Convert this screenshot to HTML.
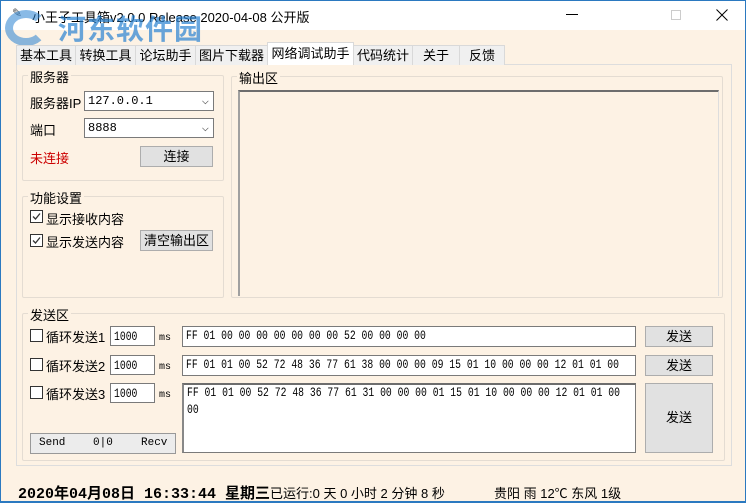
<!DOCTYPE html>
<html><head><meta charset="utf-8"><style>
*{box-sizing:border-box;margin:0;padding:0}
body{width:746px;height:503px;overflow:hidden;background:#fdf2e4;font:12px "Liberation Sans","Noto Sans CJK SC",sans-serif;color:#000;position:relative}
.a{position:absolute;white-space:nowrap}
.win{position:absolute;left:0;top:0;width:746px;height:503px;border:1px solid #2b79c0;border-bottom-width:2px}
.title{left:1px;top:1px;width:744px;height:29px;background:#fff}
.tab{top:45px;height:20px;background:#f0f0f0;border:1px solid #d9d9d9;border-bottom:none;text-align:center;line-height:19px;font-size:13px}
.tab.sel{top:42px;height:23px;background:#fff;line-height:21px}
.grp{border:1px solid #e4dcd2;border-radius:2px}
.lg{background:#fdf2e4;padding:0 2px;font-size:13px}
.box{background:#fff;border:1px solid #7a7a7a;font-family:"Liberation Mono","Noto Sans CJK SC",monospace;font-size:12px;padding:2px 3px}
.hx{display:inline-block;transform:scaleX(0.78);transform-origin:0 0;line-height:17px;font-size:12.5px}
.btn{background:#e1e1e1;border:1px solid #adadad;text-align:center;font-size:13px}
.cb{width:13px;height:13px;border:1px solid #333;background:#fff}
.mono{font-family:"Liberation Mono",monospace;font-size:11px}
</style></head><body>
<div class="a title"></div>
<div class="a" style="left:12px;top:6px;font-size:12px;color:#555">✎</div>
<div class="a" style="left:32px;top:7px;font-size:13px">小王子工具箱v2.0.0 Release 2020-04-08 公开版</div>
<div class="a" style="left:5px;top:10px;width:42px;height:36px;border-radius:50%;border:8px solid rgba(40,130,210,.55);border-right-color:transparent"></div>
<div class="a" style="left:58px;top:8px;font-size:28px;font-weight:bold;color:rgba(40,130,210,.7);letter-spacing:1px">河东软件园</div>
<div class="a" style="left:70px;top:44px;font-size:17px;font-weight:bold;color:rgba(100,160,80,.45)">www.pc0359.cn</div>
<div class="a" style="left:566px;top:14px;width:12px;height:1px;background:#000"></div>
<div class="a" style="left:671px;top:10px;width:10px;height:10px;border:1px solid #ccc"></div>
<svg class="a" style="left:716px;top:9px" width="12" height="12"><path d="M0.5 0.5L11.5 11.5M11.5 0.5L0.5 11.5" stroke="#000" stroke-width="1"/></svg>

<div class="a" style="left:16px;top:64px;width:716px;height:402px;border:1px solid #ddd;background:#fdf2e4"></div>
<div class="a tab" style="left:16px;width:60px">基本工具</div>
<div class="a tab" style="left:75px;width:61px">转换工具</div>
<div class="a tab" style="left:135px;width:61px">论坛助手</div>
<div class="a tab" style="left:195px;width:73px">图片下载器</div>
<div class="a tab sel" style="left:267px;width:87px">网络调试助手</div>
<div class="a tab" style="left:353px;width:60px">代码统计</div>
<div class="a tab" style="left:412px;width:48px">关于</div>
<div class="a tab" style="left:459px;width:46px">反馈</div>

<div class="a grp" style="left:22px;top:75px;width:202px;height:106px"></div>
<div class="a lg" style="left:28px;top:67px">服务器</div>
<div class="a" style="left:30px;top:93px;font-size:13px">服务器IP</div>
<div class="a box" style="left:84px;top:91px;width:130px;height:20px">127.0.0.1<span style="position:absolute;right:4px;top:1px;color:#555">⌵</span></div>
<div class="a" style="left:30px;top:120px;font-size:13px">端口</div>
<div class="a box" style="left:84px;top:118px;width:130px;height:20px">8888<span style="position:absolute;right:4px;top:1px;color:#555">⌵</span></div>
<div class="a" style="left:30px;top:148px;font-size:13px;color:#c00">未连接</div>
<div class="a btn" style="left:140px;top:146px;width:73px;height:21px;line-height:19px">连接</div>

<div class="a grp" style="left:22px;top:196px;width:202px;height:102px"></div>
<div class="a lg" style="left:28px;top:188px">功能设置</div>
<svg class="a" style="left:30px;top:210px" width="13" height="13"><rect x="0.5" y="0.5" width="12" height="12" fill="#fff" stroke="#333"/><path d="M3 6.5L5.5 9L10 3.5" fill="none" stroke="#333" stroke-width="1.3"/></svg>
<div class="a" style="left:46px;top:209px;font-size:13px">显示接收内容</div>
<svg class="a" style="left:30px;top:234px" width="13" height="13"><rect x="0.5" y="0.5" width="12" height="12" fill="#fff" stroke="#333"/><path d="M3 6.5L5.5 9L10 3.5" fill="none" stroke="#333" stroke-width="1.3"/></svg>
<div class="a" style="left:46px;top:232px;font-size:13px">显示发送内容</div>
<div class="a btn" style="left:140px;top:230px;width:73px;height:21px;line-height:19px">清空输出区</div>

<div class="a grp" style="left:231px;top:76px;width:492px;height:222px"></div>
<div class="a lg" style="left:237px;top:68px">输出区</div>
<div class="a" style="left:238px;top:90px;width:481px;height:206px;border-top:2px solid #6d6d6d;border-left:2px solid #a0a0a0;border-right:1px solid #ddd;background:#fdf2e4"></div>

<div class="a grp" style="left:22px;top:313px;width:703px;height:148px"></div>
<div class="a lg" style="left:28px;top:305px">发送区</div>

<div class="a cb" style="left:30px;top:329px"></div>
<div class="a" style="left:46px;top:327px;font-size:13px">循环发送1</div>
<div class="a box" style="left:110px;top:326px;width:45px;height:20px"><span class="hx">1000</span></div>
<div class="a mono" style="left:159px;top:333px;font-size:10px">ms</div>
<div class="a box" style="left:182px;top:326px;width:454px;height:21px;padding-top:1px"><span class="hx">FF 01 00 00 00 00 00 00 00 52 00 00 00 00</span></div>
<div class="a btn" style="left:645px;top:326px;width:68px;height:21px;line-height:19px">发送</div>

<div class="a cb" style="left:30px;top:358px"></div>
<div class="a" style="left:46px;top:356px;font-size:13px">循环发送2</div>
<div class="a box" style="left:110px;top:355px;width:45px;height:20px"><span class="hx">1000</span></div>
<div class="a mono" style="left:159px;top:362px;font-size:10px">ms</div>
<div class="a box" style="left:182px;top:355px;width:454px;height:21px;overflow:hidden;padding-top:1px"><span class="hx">FF 01 01 00 52 72 48 36 77 61 38 00 00 00 09 15 01 10 00 00 00 12 01 01 00</span></div>
<div class="a btn" style="left:645px;top:355px;width:68px;height:21px;line-height:19px">发送</div>

<div class="a cb" style="left:30px;top:386px"></div>
<div class="a" style="left:46px;top:384px;font-size:13px">循环发送3</div>
<div class="a box" style="left:110px;top:383px;width:45px;height:20px"><span class="hx">1000</span></div>
<div class="a mono" style="left:159px;top:390px;font-size:10px">ms</div>
<div class="a box" style="left:182px;top:383px;width:454px;height:70px;border-top:2px solid #6d6d6d;border-left:2px solid #888;padding-top:0"><span class="hx">FF 01 01 00 52 72 48 36 77 61 31 00 00 00 01 15 01 10 00 00 00 12 01 01 00<br>00</span></div>
<div class="a btn" style="left:645px;top:383px;width:68px;height:70px;line-height:68px">发送</div>
<div class="a mono" style="left:30px;top:433px;width:146px;height:21px;background:#ececec;border:1px solid #999;font-size:11px;line-height:19px"><span class="a" style="left:8px">Send</span><span class="a" style="left:62px">0|0</span><span class="a" style="left:110px">Recv</span></div>

<div class="a" style="left:18px;top:482px;font-size:15px;font-weight:bold;font-family:'Liberation Mono','Noto Sans CJK SC',monospace">2020年04月08日 16:33:44 星期三</div>
<div class="a" style="left:270px;top:483px;font-size:13px">已运行:0 天 0 小时 2 分钟 8 秒</div>
<div class="a" style="left:494px;top:483px;font-size:13px">贵阳 雨 12℃ 东风 1级</div>
<div class="win"></div>
</body></html>
